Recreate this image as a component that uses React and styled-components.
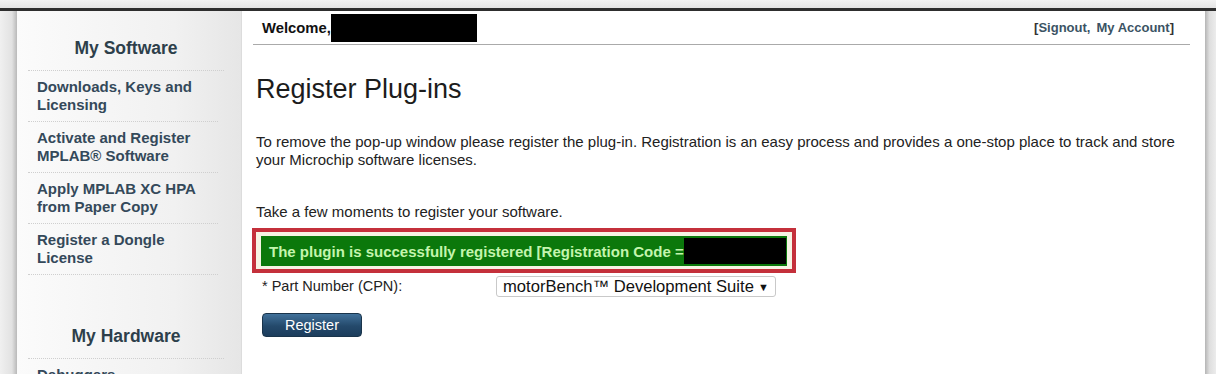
import React from 'react'
import styled, { createGlobalStyle } from 'styled-components'

const GlobalStyle = createGlobalStyle`
  html, body {
    margin: 0;
    padding: 0;
    background: #e9e9e9;
    font-family: "Liberation Sans", Arial, sans-serif;
  }
`

const Frame = styled.div`
  width: 1216px;
  height: 374px;
  overflow: hidden;
  display: flex;
  flex-direction: column;
`

const TopStrip = styled.div`
  height: 8px;
  background: linear-gradient(to bottom, #f2f2f2, #e4e4e4);
  border-bottom: 3px solid #2e2e2e;
  flex-shrink: 0;
`

const Body = styled.div`
  flex: 1;
  display: flex;
`

const Gutter = styled.div`
  width: ${p => p.$w}px;
  flex-shrink: 0;
  background: ${p => p.$side === 'left'
    ? 'linear-gradient(to right, #f0f0f0, #e2e2e2 70%, #b9b9b9)'
    : 'linear-gradient(to right, #b5b5b5, #dedede 40%, #ececec)'};
`

const Page = styled.div`
  flex: 1;
  display: flex;
  background: #fff;
`

const Sidebar = styled.aside`
  width: 225px;
  flex-shrink: 0;
  background: linear-gradient(to right, #fbfbfb, #f1f1f1 70%, #e6e6e6);
  border-right: 1px solid #dcdcdc;
  padding: 26px 17px 0 11px;
  box-sizing: border-box;
`

const SideTitle = styled.h3`
  margin: ${p => p.$top || 0}px 0 0;
  font-size: 17.5px;
  font-weight: bold;
  color: #2d3f4b;
  text-align: center;
  line-height: 22px;
  padding-bottom: 11px;
  border-bottom: 1px dotted #cfcfcf;
`

const SideItem = styled.a`
  display: block;
  font-size: 15px;
  font-weight: bold;
  line-height: 18px;
  color: #34495a;
  text-decoration: none;
  padding: 7px 8px 7px 9px;
  margin-right: 6px;
  border-bottom: ${p => (p.$last ? 'none' : '1px dotted #cfcfcf')};
`

const Main = styled.main`
  flex: 1;
  padding: 0 15px 0 11px;
`

const Header = styled.div`
  height: 33px;
  display: flex;
  align-items: center;
  justify-content: space-between;
  border-bottom: 1px solid #aaa;
  padding: 0 16px 0 9px;
  font-weight: bold;
`

const Welcome = styled.div`
  display: flex;
  align-items: center;
  color: #111;
  font-size: 14.8px;
`

const Redacted = styled.span`
  display: inline-block;
  background: #000;
  width: ${p => p.$w}px;
  height: ${p => p.$h}px;
  margin-left: ${p => (p.$push ? 'auto' : '0')};
`

const AccountLinks = styled.div`
  color: #333;
  font-size: 13px;
`

const AccountLink = styled.a`
  color: #3b5364;
  text-decoration: none;
  margin-left: ${p => p.$gap || 0}px;
`

const Content = styled.div`
  padding-left: 3px;
`

const Title = styled.h1`
  font-size: 27px;
  font-weight: normal;
  color: #1c1c1c;
  margin: 28px 0 0;
  line-height: 32px;
`

const Para = styled.p`
  font-size: 15px;
  line-height: 18px;
  color: #222;
  margin: ${p => p.$top}px 0 0;
  max-width: 935px;
`

const Highlight = styled.div`
  margin: 7px 0 0 -4px;
  width: 544px;
  box-sizing: border-box;
  border: 4px solid #c4303b;
  padding: 4px 5px 3px 5px;
  background: #f6f4e4;
`

const SuccessBar = styled.div`
  height: 30px;
  background: #0b780b;
  display: flex;
  align-items: center;
  padding: 0 1px 0 8px;
  color: #c4f5ae;
  font-size: 15px;
  font-weight: bold;
  white-space: nowrap;
`

const FormRow = styled.div`
  display: grid;
  grid-template-columns: 234px 280px;
  align-items: start;
  margin: 3px 0 0 6px;
`

const Label = styled.label`
  font-size: 14.5px;
  color: #222;
  line-height: 18px;
  padding-top: 1px;
`

const Select = styled.div`
  height: 21px;
  box-sizing: border-box;
  border: 1px solid #c9c9c9;
  border-radius: 3px;
  background: #fff;
  display: flex;
  align-items: center;
  justify-content: space-between;
  padding: 0 6px 0 6px;
  font-size: 16.6px;
  color: #111;
  white-space: nowrap;
`

const Caret = styled.span`
  font-size: 11px;
`

const Button = styled.button`
  margin: 16px 0 0 6px;
  width: 100px;
  height: 24px;
  border: 1px solid #1a344b;
  border-radius: 4px;
  background: linear-gradient(to bottom, #41719a, #24496b 55%, #1c3d5c);
  color: #fff;
  font-family: "Liberation Sans", Arial, sans-serif;
  font-size: 14.5px;
  padding: 0;
`

const softwareLinks = [
  ['Downloads, Keys and', 'Licensing'],
  ['Activate and Register', 'MPLAB® Software'],
  ['Apply MPLAB XC HPA', 'from Paper Copy'],
  ['Register a Dongle', 'License'],
]

export default function App() {
  return (
    <>
      <GlobalStyle />
      <Frame>
        <TopStrip />
        <Body>
          <Gutter $w={17} $side="left" />
          <Page>
            <Sidebar>
              <SideTitle>My Software</SideTitle>
              {softwareLinks.map(([a, b]) => (
                <SideItem key={a}>{a}<br />{b}</SideItem>
              ))}
              <SideTitle $top={50}>My Hardware</SideTitle>
              <SideItem $last>Debuggers</SideItem>
            </Sidebar>
            <Main>
              <Header>
                <Welcome>Welcome,<Redacted $w={146} $h={28} /></Welcome>
                <AccountLinks>
                  [<AccountLink>Signout,</AccountLink>
                  <AccountLink $gap={6}>My Account</AccountLink>]
                </AccountLinks>
              </Header>
              <Content>
                <Title>Register Plug-ins</Title>
                <Para $top={28}>
                  To remove the pop-up window please register the plug-in. Registration is an easy process and provides a one-stop place to track and store your Microchip software licenses.
                </Para>
                <Para $top={34}>Take a few moments to register your software.</Para>
                <Highlight>
                  <SuccessBar>
                    The plugin is successfully registered [Registration Code =
                    <Redacted $w={102} $h={26} $push />
                  </SuccessBar>
                </Highlight>
                <FormRow>
                  <Label>* Part Number (CPN):</Label>
                  <Select>
                    motorBench™ Development Suite <Caret>▼</Caret>
                  </Select>
                </FormRow>
                <Button>Register</Button>
              </Content>
            </Main>
          </Page>
          <Gutter $w={11} $side="right" />
        </Body>
      </Frame>
    </>
  )
}
